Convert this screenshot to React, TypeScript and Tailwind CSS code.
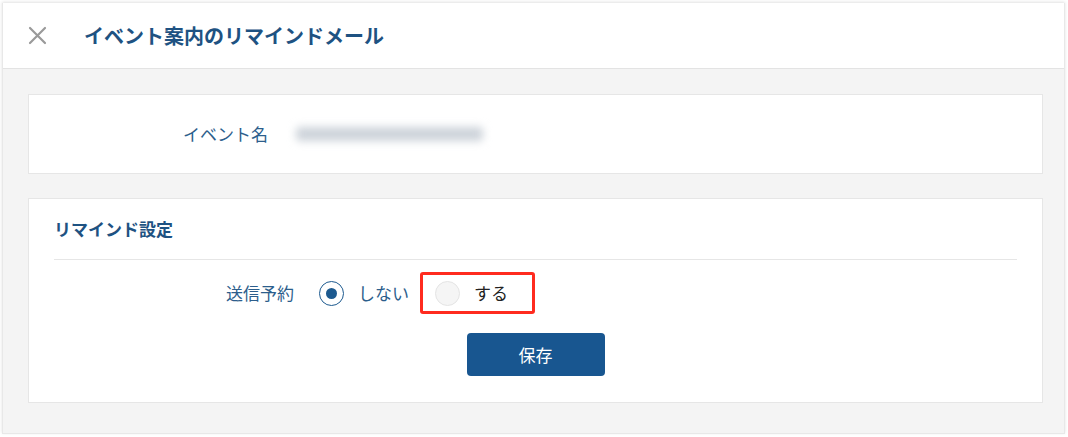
import React, { useState } from 'react';

const font = { fontFamily: '"Noto Sans CJK JP", "Noto Sans", sans-serif' };

interface RadioProps {
  checked: boolean;
  label: string;
  onSelect: () => void;
  labelClass: string;
}

const Radio: React.FC<RadioProps> = ({ checked, label, onSelect, labelClass }) => (
  <button type="button" onClick={onSelect} className="flex items-center gap-[14px]">
    {checked ? (
      <span className="flex h-[25px] w-[25px] items-center justify-center rounded-full border-[1.5px] border-[#1d5a8f] bg-white">
        <span className="h-[11px] w-[11px] rounded-full bg-[#1d5a8f]" />
      </span>
    ) : (
      <span className="h-[25px] w-[25px] rounded-full border border-[#e4e4e4] bg-[#f5f5f5]" />
    )}
    <span className={`text-[17px] leading-6 ${labelClass}`}>{label}</span>
  </button>
);

export default function App() {
  const [send, setSend] = useState(false);

  return (
    <div className="h-[437px] w-[1068px] bg-white pt-[3px]" style={font}>
      <div className="ml-[2px] h-[431px] w-[1063px] border-x border-b border-[#e8e8e8] bg-[#f4f4f4] shadow-[0_-1px_3px_rgba(0,0,0,0.12)]">
        {/* header */}
        <div className="flex h-[66px] items-center border-b border-[#e3e3e3] bg-white pl-[24px]">
          <button type="button" className="flex h-[20px] w-[20px] items-center justify-center">
            <svg width="19" height="19" viewBox="0 0 19 19" fill="none" stroke="#9a9a9a" strokeWidth="2.2" strokeLinecap="round">
              <path d="M2 2L17 17M17 2L2 17" />
            </svg>
          </button>
          <h1 className="ml-[37px] text-[20px] font-bold leading-7 text-[#1e5282]">イベント案内のリマインドメール</h1>
        </div>

        {/* body */}
        <div className="pl-[25px] pt-[25px]">
          <div className="flex h-[80px] w-[1015px] items-center border border-[#e6e6e6] bg-white">
            <div className="w-[239px] text-right text-[17px] text-[#2c5e8c]">イベント名</div>
            <div className="ml-[28px] h-[14px] w-[187px] rounded-sm bg-[#cdd3da] blur-[4px]" />
          </div>

          <div className="mt-[24px] w-[1015px] border border-[#e6e6e6] bg-white px-[25px] pb-[26px]">
            <div className="border-b border-[#e6e6e6] pt-[18px] pb-[18px]">
              <h2 className="text-[17px] font-bold leading-6 text-[#1e5282]">リマインド設定</h2>
            </div>

            <div className="mt-[12px] flex h-[42px] items-center">
              <div className="w-[240px] text-right text-[17px] text-[#2c5e8c]">送信予約</div>
              <div className="ml-[25px] flex items-center">
                <Radio checked={!send} label="しない" onSelect={() => setSend(false)} labelClass="text-[#2c5e8c]" />
                <div className="ml-[11px] flex h-[42px] w-[115px] items-center rounded-[3px] border-[3px] border-[#ff2b1f] pl-[12px]">
                  <Radio checked={send} label="する" onSelect={() => setSend(true)} labelClass="text-[#222]" />
                </div>
              </div>
            </div>

            <div className="mt-[19px] flex justify-center">
              <button type="button" className="h-[43px] w-[138px] rounded-[4px] bg-[#185690] text-[17px] text-white">
                保存
              </button>
            </div>
          </div>
        </div>
      </div>
    </div>
  );
}
